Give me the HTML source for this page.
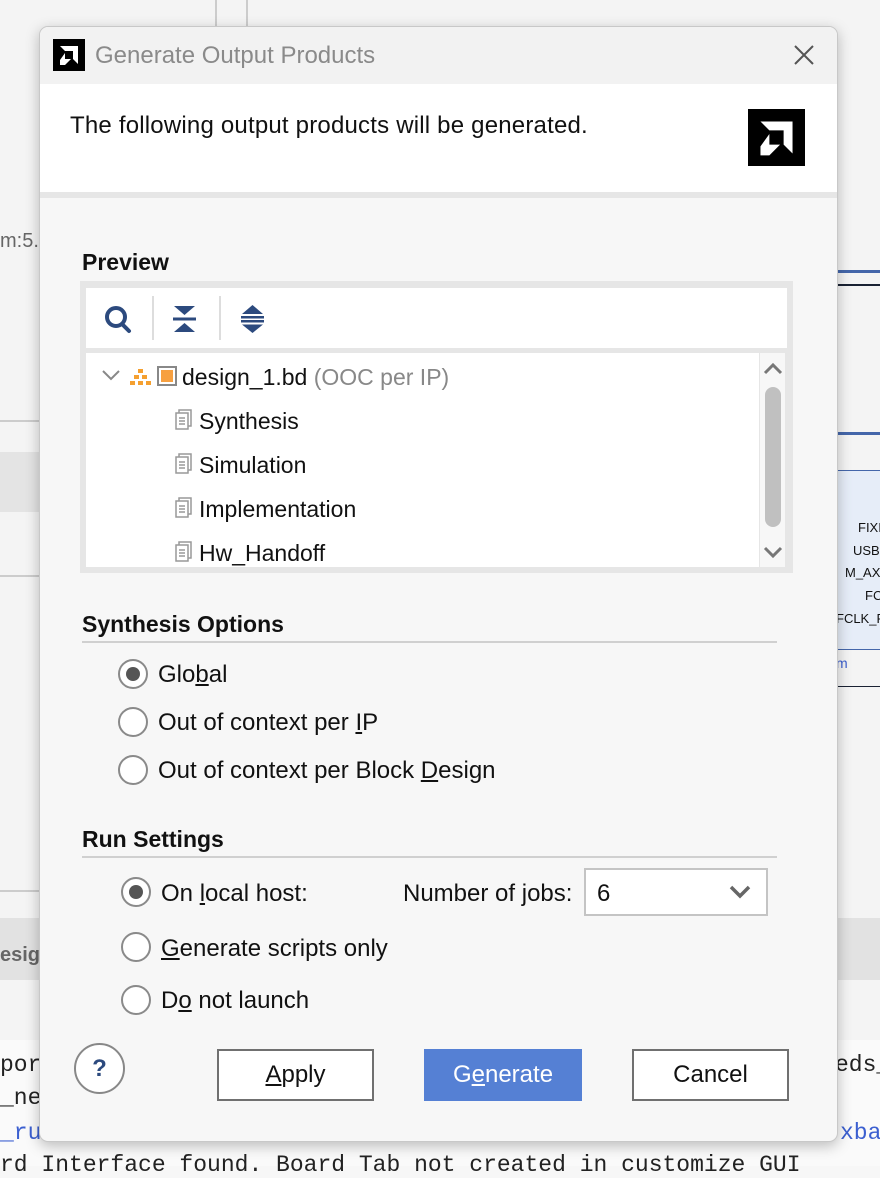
<!DOCTYPE html>
<html><head><meta charset="utf-8"><style>
*{box-sizing:border-box;margin:0;padding:0}
body{width:880px;height:1166px;position:relative;overflow:hidden;background:#f7f7f7;font-family:"Liberation Sans",sans-serif;color:#111}
.a{position:absolute}
.t{position:absolute;white-space:nowrap;font-size:24px;line-height:26px}
.mono{font-family:"Liberation Mono",monospace;font-size:23px;color:#222}
.rad{position:absolute;width:30px;height:30px;border:2px solid #8a8a8a;border-radius:50%;background:#fff}
.rad.on::after{content:"";position:absolute;left:6px;top:6px;width:14px;height:14px;border-radius:50%;background:#555}
.btn{position:absolute;height:52px;border:2px solid #707070;background:#fff;font-size:24px;text-align:center;line-height:48px}
u{text-decoration:underline}
.tr{font-size:23px}
</style></head><body>
<div class="a" style="left:0;top:0;width:880px;height:1166px;background:#f4f4f4"></div>
<div class="a" style="left:215px;top:0;width:2px;height:30px;background:#ccc"></div>
<div class="a" style="left:246px;top:0;width:2px;height:30px;background:#ccc"></div>
<div class="t" style="left:0;top:228px;color:#666;font-size:20px">m:5.5</div>
<div class="a" style="left:0;top:420px;width:60px;height:2px;background:#ccc"></div>
<div class="a" style="left:0;top:452px;width:60px;height:60px;background:#e4e4e4"></div>
<div class="a" style="left:0;top:575px;width:60px;height:2px;background:#ccc"></div>
<div class="a" style="left:0;top:890px;width:60px;height:2px;background:#ccc"></div>
<div class="a" style="left:0;top:918px;width:880px;height:62px;background:#e2e2e2"></div>
<div class="t" style="left:0;top:942px;color:#666;font-weight:bold;font-size:20px">esig</div>
<div class="a" style="left:0;top:1040px;width:880px;height:126px;background:#fafafa"></div>
<div class="t mono" style="left:0;top:1052px">por</div>
<div class="t mono" style="left:0;top:1085px">_ne</div>
<div class="t mono" style="left:0;top:1120px;color:#3b5fd0">_ru</div>
<div class="t mono" style="left:0;top:1152px">rd Interface found. Board Tab not created in customize GUI</div>
<div class="t mono" style="left:835px;top:1052px">eds_</div>
<div class="t mono" style="left:840px;top:1120px;color:#3b5fd0">xba</div>
<div class="a" style="left:838px;top:270px;width:42px;height:3px;background:#4466aa"></div>
<div class="a" style="left:838px;top:284px;width:42px;height:2px;background:#1a2233"></div>
<div class="a" style="left:838px;top:432px;width:42px;height:3px;background:#4466aa"></div>
<div class="a" style="left:838px;top:470px;width:42px;height:180px;background:#e6edf8;border-top:1px solid #4466aa;border-bottom:1px solid #4466aa"></div>
<div class="t" style="left:858px;top:515px;font-size:13px">FIXI</div>
<div class="t" style="left:853px;top:538px;font-size:13px">USBI</div>
<div class="t" style="left:845px;top:560px;font-size:13px">M_AX</div>
<div class="t" style="left:865px;top:583px;font-size:13px">FC</div>
<div class="t" style="left:836px;top:606px;font-size:13px">FCLK_R</div>
<div class="t" style="left:836px;top:650px;font-size:14px;color:#3b5fd0">m</div>
<div class="a" style="left:838px;top:686px;width:42px;height:1px;background:#1a2233"></div>

<div class="a" style="left:39px;top:26px;width:799px;height:1116px;border-radius:9px;background:#f7f7f7;border:1px solid #c8c8c8;box-shadow:0 4px 14px rgba(0,0,0,.25);overflow:hidden">
  <div class="a" style="left:0;top:0;width:799px;height:57px;background:#f2f2f2"></div>
  <div class="a" style="left:0;top:57px;width:799px;height:108px;background:#fff"></div>
  <div class="a" style="left:0;top:165px;width:799px;height:6px;background:#e6e6e6"></div>
</div>
<svg class="a" style="left:53px;top:39px" width="32" height="32" viewBox="0 0 32 32"><rect width="32" height="32" fill="#000"/><path d="M7 7h18v18l-5-5V12h-8zM12 14v6h6l-6 6H7v-5z" fill="#fff"/></svg>
<div class="t" style="left:95px;top:43px;color:#8a8a8a">Generate Output Products</div>
<svg class="a" style="left:793px;top:44px" width="22" height="22"><path d="M2 2L20 20M20 2L2 20" stroke="#555" stroke-width="2"/></svg>
<div class="t" style="left:70px;top:113px;letter-spacing:0.2px">The following output products will be generated.</div>
<svg class="a" style="left:748px;top:109px" width="57" height="57" viewBox="0 0 32 32"><rect width="32" height="32" fill="#000"/><path d="M7 7h18v18l-5-5V12h-8zM12 14v6h6l-6 6H7v-5z" fill="#fff"/></svg>

<div class="t" style="left:82px;top:249px;font-weight:bold;font-size:23px">Preview</div>
<div class="a" style="left:80px;top:281px;width:713px;height:292px;background:#e6e6e6"></div>
<div class="a" style="left:86px;top:288px;width:701px;height:60px;background:#fff"></div>
<svg class="a" style="left:104px;top:304px" width="30" height="30"><circle cx="12" cy="13" r="9" fill="none" stroke="#2c4a7e" stroke-width="4"/><path d="M18 20l7 7" stroke="#2c4a7e" stroke-width="4" stroke-linecap="round"/></svg>
<div class="a" style="left:152px;top:296px;width:2px;height:44px;background:#ddd"></div>
<svg class="a" style="left:172px;top:305px" width="26" height="28"><path d="M2 1h21l-10.5 9z" fill="#2c4a7e"/><rect x="1" y="12.5" width="23" height="3" fill="#2c4a7e"/><path d="M2 27h21l-10.5-9z" fill="#2c4a7e"/></svg>
<div class="a" style="left:219px;top:296px;width:2px;height:44px;background:#ddd"></div>
<svg class="a" style="left:240px;top:305px" width="26" height="28"><path d="M2 9h21L12.5 0z" fill="#2c4a7e"/><rect x="1" y="11" width="23" height="2.5" fill="#2c4a7e"/><rect x="1" y="15" width="23" height="2.5" fill="#2c4a7e"/><path d="M2 19.5h21L12.5 28z" fill="#2c4a7e"/></svg>
<div class="a" style="left:86px;top:353px;width:673px;height:214px;background:#fff"></div>
<div class="a" style="left:760px;top:353px;width:25px;height:214px;background:#f7f7f7"></div>
<svg class="a" style="left:763px;top:360px" width="20" height="16"><path d="M2 13l8-8 8 8" fill="none" stroke="#777" stroke-width="3"/></svg>
<div class="a" style="left:765px;top:387px;width:16px;height:140px;border-radius:8px;background:#c0c0c0"></div>
<svg class="a" style="left:763px;top:545px" width="20" height="16"><path d="M2 3l8 8 8-8" fill="none" stroke="#777" stroke-width="3"/></svg>

<svg class="a" style="left:102px;top:370px" width="18" height="12"><path d="M1 1l8 8 8-8" fill="none" stroke="#888" stroke-width="2"/></svg>
<svg class="a" style="left:130px;top:368px" width="22" height="18"><g fill="#f5a030"><rect x="8" y="1" width="5" height="4"/><rect x="4" y="7" width="5" height="4"/><rect x="12" y="7" width="5" height="4"/><rect x="0" y="13" width="5" height="4"/><rect x="8" y="13" width="5" height="4"/><rect x="16" y="13" width="5" height="4"/></g></svg>
<div class="a" style="left:157px;top:366px;width:20px;height:20px;border:2px solid #888;background:#fff"><div style="margin:2px;width:12px;height:12px;background:#f7a040"></div></div>
<div class="t tr" style="left:182px;top:364px">design_1.bd <span style="color:#888">(OOC per IP)</span></div>
<svg class="a" style="left:175px;top:409px" width="18" height="22"><rect x="4" y="1" width="12" height="16" fill="#fff" stroke="#999" stroke-width="1.5"/><rect x="1" y="4" width="12" height="16" fill="#fff" stroke="#999" stroke-width="1.5"/><path d="M4 9h6M4 12h6M4 15h6" stroke="#999" stroke-width="1.5"/></svg>
<div class="t tr" style="left:199px;top:408px">Synthesis</div>
<svg class="a" style="left:175px;top:453px" width="18" height="22"><rect x="4" y="1" width="12" height="16" fill="#fff" stroke="#999" stroke-width="1.5"/><rect x="1" y="4" width="12" height="16" fill="#fff" stroke="#999" stroke-width="1.5"/><path d="M4 9h6M4 12h6M4 15h6" stroke="#999" stroke-width="1.5"/></svg>
<div class="t tr" style="left:199px;top:452px">Simulation</div>
<svg class="a" style="left:175px;top:497px" width="18" height="22"><rect x="4" y="1" width="12" height="16" fill="#fff" stroke="#999" stroke-width="1.5"/><rect x="1" y="4" width="12" height="16" fill="#fff" stroke="#999" stroke-width="1.5"/><path d="M4 9h6M4 12h6M4 15h6" stroke="#999" stroke-width="1.5"/></svg>
<div class="t tr" style="left:199px;top:496px">Implementation</div>
<svg class="a" style="left:175px;top:541px" width="18" height="22"><rect x="4" y="1" width="12" height="16" fill="#fff" stroke="#999" stroke-width="1.5"/><rect x="1" y="4" width="12" height="16" fill="#fff" stroke="#999" stroke-width="1.5"/><path d="M4 9h6M4 12h6M4 15h6" stroke="#999" stroke-width="1.5"/></svg>
<div class="t tr" style="left:199px;top:540px">Hw_Handoff</div>

<div class="t" style="left:82px;top:611px;font-weight:bold;font-size:23px">Synthesis Options</div>
<div class="a" style="left:82px;top:641px;width:695px;height:2px;background:#d0d0d0"></div>
<div class="rad on" style="left:118px;top:659px"></div>
<div class="t" style="left:158px;top:662px">Glo<u>b</u>al</div>
<div class="rad" style="left:118px;top:707px"></div>
<div class="t" style="left:158px;top:710px">Out of context per <u>I</u>P</div>
<div class="rad" style="left:118px;top:755px"></div>
<div class="t" style="left:158px;top:758px">Out of context per Block <u>D</u>esign</div>

<div class="t" style="left:82px;top:826px;font-weight:bold;font-size:23px">Run Settings</div>
<div class="a" style="left:82px;top:856px;width:695px;height:2px;background:#d0d0d0"></div>
<div class="rad on" style="left:121px;top:877px"></div>
<div class="t" style="left:161px;top:881px">On <u>l</u>ocal host:</div>
<div class="t" style="left:403px;top:881px">Number of <u>j</u>obs:</div>
<div class="a" style="left:584px;top:868px;width:184px;height:48px;border:2px solid #c4c4c4;background:#fff"></div>
<div class="t" style="left:597px;top:881px">6</div>
<svg class="a" style="left:729px;top:885px" width="22" height="14"><path d="M2 2l9 9 9-9" fill="none" stroke="#666" stroke-width="3.5"/></svg>
<div class="rad" style="left:121px;top:932px"></div>
<div class="t" style="left:161px;top:936px"><u>G</u>enerate scripts only</div>
<div class="rad" style="left:121px;top:985px"></div>
<div class="t" style="left:161px;top:988px">D<u>o</u> not launch</div>

<div class="a" style="left:74px;top:1043px;width:51px;height:51px;border:2px solid #888;border-radius:50%;background:#fff;text-align:center;line-height:47px;font-size:24px;font-weight:bold;color:#2c4a7e">?</div>
<div class="btn" style="left:217px;top:1049px;width:157px"><u>A</u>pply</div>
<div class="btn" style="left:424px;top:1049px;width:158px;background:#5580d4;border-color:#5580d4;color:#fff">G<u>e</u>nerate</div>
<div class="btn" style="left:632px;top:1049px;width:157px">Cancel</div>
</body></html>
